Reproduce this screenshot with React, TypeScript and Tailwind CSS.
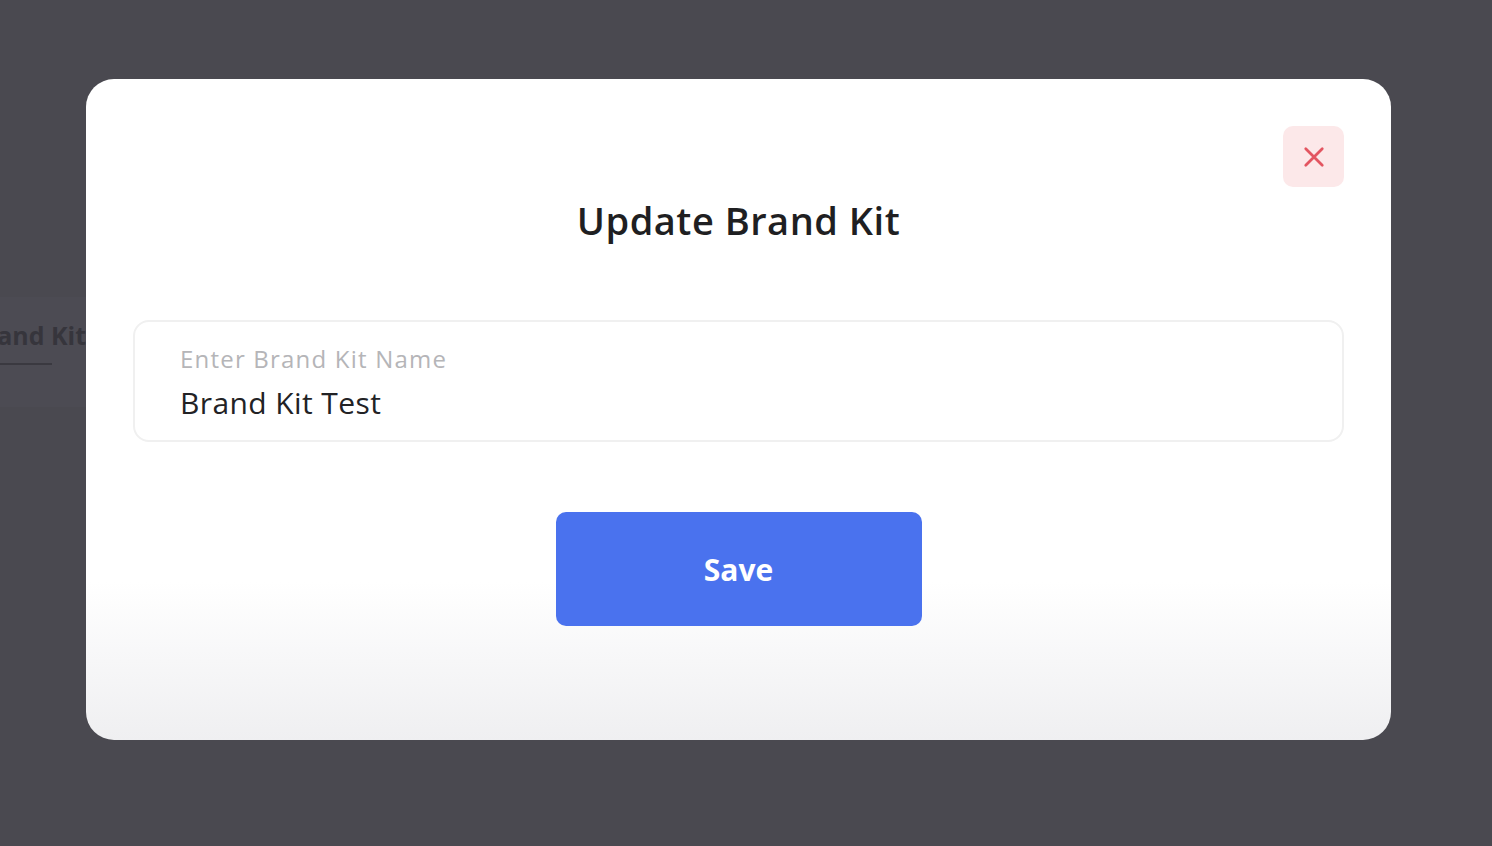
import React from "react";

export default function App() {
  return (
    <div className="relative w-[1492px] h-[846px] overflow-hidden bg-[#4a4950]" style={{ fontFamily: "'Open Sans', Lato, sans-serif" }}>
      {/* background content behind overlay */}
      <div className="pt-[297px]">
        <div className="w-[90px] h-[110px] bg-[#4c4b53]">
          <div className="pt-[20px] -ml-[31px] text-[25px] font-bold text-[#36353c] whitespace-nowrap">Brand Kit</div>
          <div className="mt-[8px] w-[52px] h-[2px] bg-[#3a3940]" />
        </div>
      </div>

      {/* modal */}
      <div className="absolute inset-0 pt-[79px] pl-[86px]">
        <div className="relative w-[1305px] h-[661px] rounded-[28px] bg-gradient-to-b from-white from-[76%] to-[#efeff1] px-[47px] pt-[113px]">
          <button className="absolute top-[47px] right-[47px] w-[61px] h-[61px] rounded-[10px] bg-[#fce8e9] flex items-center justify-center">
            <svg width="22" height="22" viewBox="0 0 24 24" fill="none" stroke="#e35561" strokeWidth="3" strokeLinecap="round">
              <path d="M3 3L21 21M21 3L3 21" />
            </svg>
          </button>
          <h1 className="text-center text-[38px] leading-[56px] font-semibold tracking-[0.5px] text-[#1f1f22]">Update Brand Kit</h1>
          <div className="mt-[72px] h-[122px] rounded-[16px] border-2 border-[#f0f0f0] px-[45px] pt-[22px]">
            <div className="text-[24px] leading-[30px] tracking-[1.2px] text-[#b5b5b8]">Enter Brand Kit Name</div>
            <div className="mt-[11px] text-[30px] leading-[36px] tracking-[0.4px] text-[#222225]">Brand Kit Test</div>
          </div>
          <div className="mt-[70px] flex justify-center">
            <button className="w-[366px] h-[114px] rounded-[10px] bg-[#4a72ee] text-white text-[30px] font-bold">Save</button>
          </div>
        </div>
      </div>
    </div>
  );
}
